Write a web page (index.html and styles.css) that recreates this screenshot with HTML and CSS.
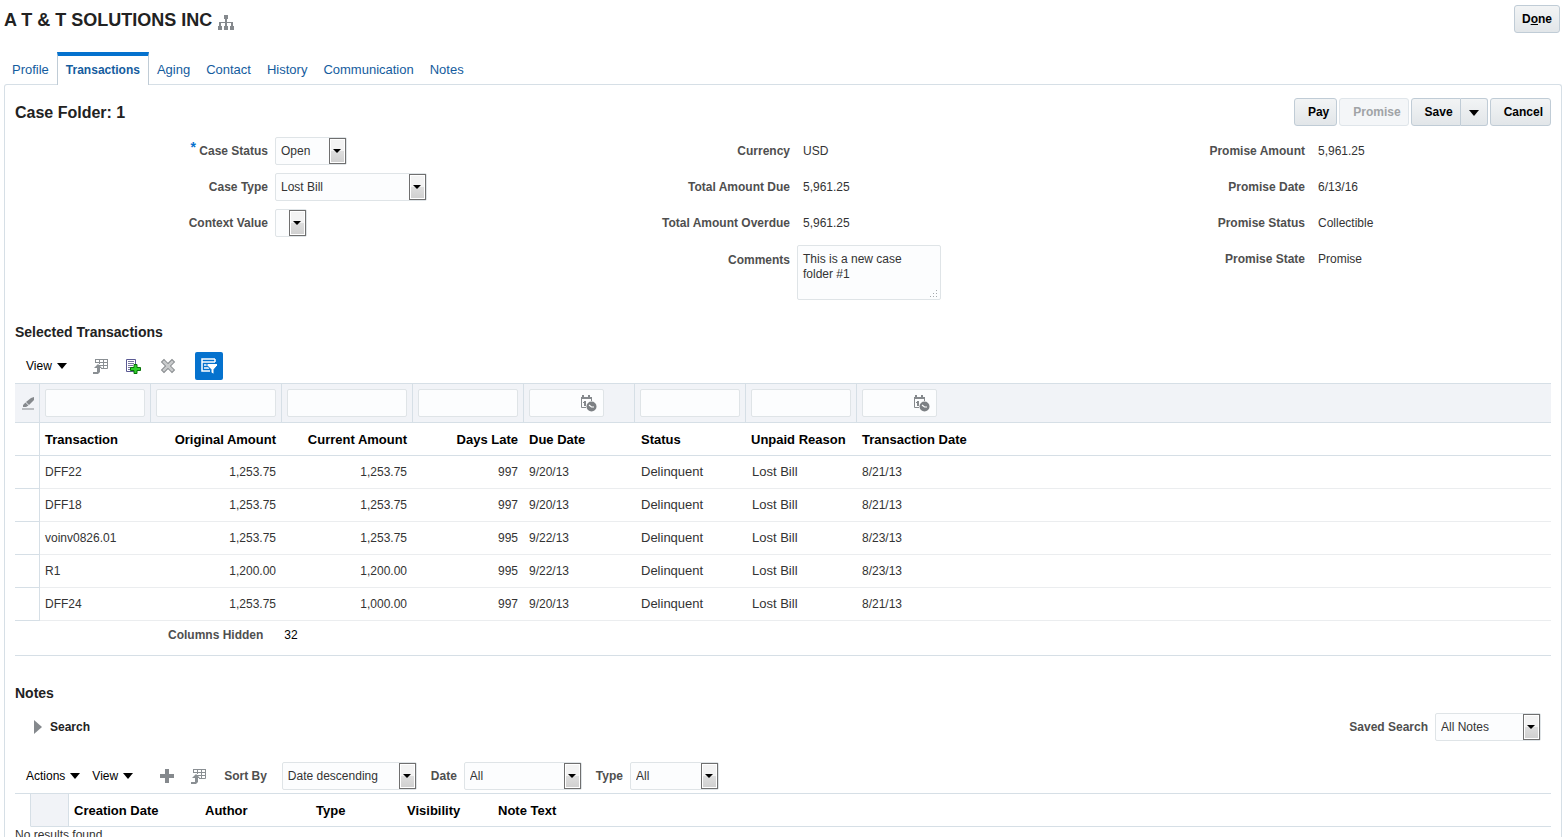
FILE: index.html
```html
<!DOCTYPE html>
<html lang="en">
<head>
<meta charset="utf-8">
<title>A T &amp; T SOLUTIONS INC</title>
<link rel="stylesheet" href="styles.css">
</head>
<body>
<svg class="sprite" aria-hidden="true">
  <symbol id="detach" viewBox="0 0 16 16">
    <path fill="none" stroke="#8a8f93" d="M2.500 5V1.500h12v9H8M2 4.500h12.500M6 7.500h8.500M6.500 1v5M10.500 1v9.500"/>
    <path fill="#8a8f93" d="M2 1h13v1H2zM5 6l4 4H7v4l-2 2H0v-2h4v-4H1z"/>
  </symbol>
  <symbol id="calendar" viewBox="0 0 17 17">
    <path fill="none" stroke="#85898d" d="M6 12.500H1.500V3.500h10V6"/>
    <path fill="#85898d" d="M1 2h11v2H1zM2 0h2v3H2zM8 0h2v3H8zM4 6h2v5H4V8H3V7h1z"/>
    <circle cx="11.500" cy="11.500" r="5" fill="#7c8084"/>
    <path d="M9 10l2.500 2H14" fill="none" stroke="#fff" stroke-width="1.200"/>
  </symbol>
</svg>

<header class="page-head">
  <h1>A T &amp; T SOLUTIONS INC</h1>
  <svg class="org" viewBox="0 0 16 15" aria-hidden="true"><path fill="#85898d" d="M6 0h4v4H9v3h6v4h1v4h-4v-4h1V8H9v3h1v4H6v-4h1V8H3v3h1v4H0v-4h1V7h6V4H6z"/></svg>
  <button class="btn done" type="button">D<u>o</u>ne</button>
</header>

<nav class="tabs">
  <a href="#profile">Profile</a>
  <a href="#transactions" class="current" aria-current="page">Transactions</a>
  <a href="#aging">Aging</a>
  <a href="#contact">Contact</a>
  <a href="#history">History</a>
  <a href="#communication">Communication</a>
  <a href="#notes">Notes</a>
</nav>

<main class="panel">
  <div class="section-head">
    <h2>Case Folder: 1</h2>
    <div class="actions">
      <button class="btn" type="button">Pay</button>
      <button class="btn" type="button" disabled>Promise</button>
      <span class="split">
        <button class="btn save" type="button">Save</button>
        <button class="btn more" type="button" aria-label="More save options"><span class="caret"></span></button>
      </span>
      <button class="btn" type="button">Cancel</button>
    </div>
  </div>

  <div class="form">
    <div class="form-col">
      <div class="field"><label for="status"><span class="req">*</span> Case Status</label><span class="select w-status"><select id="status"><option>Open</option></select></span></div>
      <div class="field"><label for="ctype">Case Type</label><span class="select w-type"><select id="ctype"><option>Lost Bill</option></select></span></div>
      <div class="field"><label for="context">Context Value</label><span class="select w-context"><select id="context"><option></option></select></span></div>
    </div>
    <dl class="form-col">
      <div class="field"><dt>Currency</dt><dd>USD</dd></div>
      <div class="field"><dt>Total Amount Due</dt><dd>5,961.25</dd></div>
      <div class="field"><dt>Total Amount Overdue</dt><dd>5,961.25</dd></div>
      <div class="field tall"><dt><label for="comments">Comments</label></dt><dd class="area">
        <textarea id="comments">This is a new case folder #1</textarea>
        <svg class="grip" viewBox="0 0 9 9" aria-hidden="true"><path fill="#a5a9ad" d="M7 0h1v1H7zM7 3h1v1H7zM4 3h1v1H4zM7 6h1v1H7zM4 6h1v1H4zM1 6h1v1H1z"/></svg>
      </dd></div>
    </dl>
    <dl class="form-col">
      <div class="field"><dt>Promise Amount</dt><dd>5,961.25</dd></div>
      <div class="field"><dt>Promise Date</dt><dd>6/13/16</dd></div>
      <div class="field"><dt>Promise Status</dt><dd>Collectible</dd></div>
      <div class="field"><dt>Promise State</dt><dd>Promise</dd></div>
    </dl>
  </div>

  <h3>Selected Transactions</h3>
  <div class="toolbar">
    <button class="menu" type="button">View <span class="caret"></span></button>
    <button class="icon first" type="button" aria-label="Detach"><svg viewBox="0 0 16 16"><use href="#detach"/></svg></button>
    <button class="icon" type="button" aria-label="Add row"><svg viewBox="0 0 16 16"><path fill="#fff" stroke="#5b5a94" d="M1.500 1.500h9v12h-9z"/><path stroke="#77769f" d="M3 3.500h6M3 5.500h6M3 7.500h5M3 9.500h3M3 11.500h3"/><path fill="#2fd02a" stroke="#087308" d="M9 6.500h3v3h3.500v3H12v3H9v-3H5.500v-3H9z"/></svg></button>
    <button class="icon delete" type="button" aria-label="Delete"><svg viewBox="0 0 16 16"><path d="M4 4l8 8M12 4l-8 8" fill="none" stroke="#84888b" stroke-width="4.500" stroke-linecap="square"/><path d="M4 4l8 8M12 4l-8 8" fill="none" stroke="#c9cbcc" stroke-width="2.600" stroke-linecap="square"/></svg></button>
    <button class="icon filter" type="button" aria-label="Query by example" aria-pressed="true"><svg viewBox="0 0 16 16"><path fill="none" stroke="#fff" stroke-width="1.500" d="M14 1H1v12h8M1 4h13M14 1v3M3 7h4M3 10h5"/><path fill="#fff" stroke="#0572ce" d="M6 5.500h10.500v2L13 11.500V16h-1l-2-1.500v-3l-4-4z"/></svg></button>
  </div>

  <table class="grid trans">
    <colgroup><col class="c-sel"><col class="c-mid"><col class="c-amt"><col class="c-amt"><col class="c-mid"><col class="c-mid"><col class="c-mid"><col class="c-mid"><col></colgroup>
    <thead>
      <tr class="filters">
        <td><button class="eraser" type="button" aria-label="Clear filters"><svg viewBox="0 0 12 14"><path fill="#85898d" d="M12 1v3L7 9 4 6l5-4zM3.500 6.500l3 3L4 11H1V9zM0 12.500h12v1H0z"/></svg></button></td>
        <td><input type="text" aria-label="Filter Transaction"></td>
        <td><input type="text" aria-label="Filter Original Amount"></td>
        <td><input type="text" aria-label="Filter Current Amount"></td>
        <td><input type="text" aria-label="Filter Days Late"></td>
        <td><span class="date"><input type="text" aria-label="Filter Due Date"><svg viewBox="0 0 17 17" aria-hidden="true"><use href="#calendar"/></svg></span></td>
        <td><input type="text" aria-label="Filter Status"></td>
        <td><input type="text" aria-label="Filter Unpaid Reason"></td>
        <td><span class="date"><input type="text" aria-label="Filter Transaction Date"><svg viewBox="0 0 17 17" aria-hidden="true"><use href="#calendar"/></svg></span></td>
      </tr>
      <tr><th></th><th>Transaction</th><th class="num">Original Amount</th><th class="num">Current Amount</th><th class="num">Days Late</th><th>Due Date</th><th class="word">Status</th><th>Unpaid Reason</th><th>Transaction Date</th></tr>
    </thead>
    <tbody>
      <tr><td></td><td>DFF22</td><td class="num">1,253.75</td><td class="num">1,253.75</td><td class="num">997</td><td>9/20/13</td><td class="word">Delinquent</td><td class="word">Lost Bill</td><td>8/21/13</td></tr>
      <tr><td></td><td>DFF18</td><td class="num">1,253.75</td><td class="num">1,253.75</td><td class="num">997</td><td>9/20/13</td><td class="word">Delinquent</td><td class="word">Lost Bill</td><td>8/21/13</td></tr>
      <tr><td></td><td>voinv0826.01</td><td class="num">1,253.75</td><td class="num">1,253.75</td><td class="num">995</td><td>9/22/13</td><td class="word">Delinquent</td><td class="word">Lost Bill</td><td>8/23/13</td></tr>
      <tr><td></td><td>R1</td><td class="num">1,200.00</td><td class="num">1,200.00</td><td class="num">995</td><td>9/22/13</td><td class="word">Delinquent</td><td class="word">Lost Bill</td><td>8/23/13</td></tr>
      <tr><td></td><td>DFF24</td><td class="num">1,253.75</td><td class="num">1,000.00</td><td class="num">997</td><td>9/20/13</td><td class="word">Delinquent</td><td class="word">Lost Bill</td><td>8/21/13</td></tr>
    </tbody>
  </table>
  <div class="hidden-cols"><b>Columns Hidden</b><span>32</span></div>

  <h3 class="notes-title">Notes</h3>
  <div class="search-row">
    <button class="disclose" type="button" aria-expanded="false"><span class="tri"></span>Search</button>
    <div class="saved"><label for="saved">Saved Search</label><span class="select w-saved"><select id="saved"><option>All Notes</option></select></span></div>
  </div>
  <div class="toolbar notes-bar">
    <button class="menu" type="button">Actions <span class="caret"></span></button>
    <button class="menu" type="button">View <span class="caret"></span></button>
    <button class="icon first" type="button" aria-label="Create"><svg viewBox="0 0 16 16"><path fill="#85898d" d="M6 1h4v5h5v4h-5v5H6v-5H1V6h5z"/></svg></button>
    <button class="icon" type="button" aria-label="Detach"><svg viewBox="0 0 16 16"><use href="#detach"/></svg></button>
    <div class="pick sort"><label for="sort">Sort By</label><span class="select w-sort"><select id="sort"><option>Date descending</option></select></span></div>
    <div class="pick"><label for="ndate">Date</label><span class="select w-date"><select id="ndate"><option>All</option></select></span></div>
    <div class="pick"><label for="ntype">Type</label><span class="select w-ntype"><select id="ntype"><option>All</option></select></span></div>
  </div>
  <table class="grid notes">
    <colgroup><col class="n-edge"><col class="n-sel"><col class="c-amt"><col class="c-mid"><col class="n-mid"><col class="n-mid"><col></colgroup>
    <thead><tr><th></th><th></th><th>Creation Date</th><th>Author</th><th>Type</th><th>Visibility</th><th>Note Text</th></tr></thead>
    <tbody><tr><td colspan="7">No results found.</td></tr></tbody>
  </table>
</main>
</body>
</html>
```
FILE: styles.css
```css
*, *::before { box-sizing: border-box; }

html { scrollbar-width: none; }

body {
  margin: 0;
  padding: 5px 5px 0 4px;
  min-height: 100vh;
  background: #fff;
  color: #333;
  font: 12px/16px "Liberation Sans", Arial, sans-serif;
}

button, input, select, textarea { font: inherit; color: inherit; margin: 0; }
button { cursor: pointer; }
h1, h2, h3, dl, dd { margin: 0; }
.sprite { position: absolute; width: 0; height: 0; }

.page-head { display: flex; align-items: flex-start; padding-right: 2px; }
h1 { color: #222; font-size: 18px; line-height: 30px; }
.org { width: 16px; height: 15px; margin: 10px 0 0 6px; }

.btn {
  height: 28px;
  padding: 0 7px 0 13px;
  border: 1px solid #c0ccd6;
  border-radius: 3px;
  background: linear-gradient(#f2f4f5, #e2e6e9);
  color: #000;
  font-weight: bold;
}
.btn:disabled { border-color: #dfe5ea; background: #f4f6f8; color: #a0a3a6; }
.done { margin-left: auto; padding: 0 7px; }

.tabs { display: flex; margin: 17px 0 -1px; }
.tabs a {
  height: 33px;
  padding: 10px 8px 0;
  color: #145c9e;
  font-size: 13px;
  text-decoration: none;
}
.tabs a.current {
  padding: 6px 8px 0;
  border: solid #c0ccd6;
  border-width: 0 1px;
  border-top: 4px solid #0572ce;
  background: #fff;
  font-size: 12px;
  font-weight: bold;
  position: relative;
}

.panel {
  min-height: calc(100vh - 84px);
  padding: 13px 10px 0;
  border: 1px solid #d6dfe6;
  border-bottom: 0;
  border-radius: 3px 3px 0 0;
}

.section-head { display: flex; justify-content: space-between; align-items: flex-start; height: 35px; }
h2 { color: #222; font-size: 16px; line-height: 30px; }
.actions { display: flex; gap: 2px; }
.split { display: flex; }
.save { padding-right: 7px; border-radius: 3px 0 0 3px; }
.more { width: 27px; padding: 0; border-left: 0; border-radius: 0 3px 3px 0; }
.caret {
  display: inline-block;
  border: 5px solid transparent;
  border-top: 6px solid #000;
  border-bottom: 0;
}

.form { display: grid; grid-template-columns: 522fr 515fr 499fr; color: #333; }
.field { display: grid; grid-template-columns: 253px 1fr; align-items: center; min-height: 36px; column-gap: 7px; }
.field > label, dt, .hidden-cols b, .pick label, .saved label { color: #4f4f4f; font-weight: bold; }
.field > label, dt { text-align: right; }
.req { color: #0572ce; vertical-align: 3px; line-height: 8px; font-size: 14px; }
dd { padding-left: 6px; }
.field.tall { align-items: start; padding-top: 4px; }
.tall dt { padding-top: 7px; }
dd.area { position: relative; width: 144px; padding: 0; }
textarea {
  display: block;
  width: 100%;
  height: 55px;
  padding: 6px 5px;
  border: 1px solid #dfe4e7;
  border-radius: 2px;
  background: #fcfdfe;
  line-height: 15px;
  resize: none;
}
.grip { position: absolute; right: 3px; bottom: 1px; width: 9px; height: 9px; }

.select { position: relative; display: block; height: 28px; }
.select select {
  appearance: none;
  width: 100%;
  height: 28px;
  padding: 0 20px 0 5px;
  border: 1px solid #dfe4e7;
  border-radius: 2px;
  background: #fcfdfe;
}
.select::before {
  content: "";
  position: absolute;
  top: 1px;
  right: 1px;
  width: 17px;
  height: 26px;
  border: 1px solid #6f6f6f;
  background: linear-gradient(#f3f3f3 50%, #dedede 50%, #cfcfcf);
  box-shadow: inset 0 0 0 1px #fff;
  pointer-events: none;
}
.select::after {
  content: "";
  position: absolute;
  top: 12px;
  right: 6px;
  border: 4px solid transparent;
  border-top-color: #000;
  border-bottom: 0;
  pointer-events: none;
}
.w-status { width: 72px; }
.w-type { width: 152px; }
.w-context { width: 32px; }
.w-saved { width: 106px; }
.w-sort { width: 135px; }
.w-date { width: 118px; }
.w-ntype { width: 89px; }

h3 { margin-top: 24px; color: #222; font-size: 14px; line-height: 16px; }
.toolbar { display: flex; align-items: center; height: 28px; margin: 12px 0 3px; padding-left: 11px; }
.menu { display: flex; align-items: center; gap: 5px; margin-right: 12px; padding: 0; border: 0; background: none; color: #000; }
.icon { width: 16px; height: 16px; margin-right: 16px; padding: 0; border: 0; background: none; }
.icon.first { margin-left: 14px; }
.icon svg, .eraser svg { display: block; width: 100%; height: 100%; }
.icon.delete { margin: 0 16px 0 3px; }
.icon.filter { width: 28px; height: 28px; margin-left: 3px; padding: 6px; border-radius: 2px; background: #0572ce; }

.grid { width: 100%; table-layout: fixed; border-spacing: 0; }
.grid th, .grid td { padding: 0 5px; text-align: left; white-space: nowrap; }
.grid th { height: 33px; padding-top: 1px; border-bottom: 1px solid #d6dfe6; color: #000; font-size: 13px; }
.grid .num { padding-right: 6px; text-align: right; }
.c-sel { width: 25px; }
.c-mid { width: 111px; }
.c-amt { width: 131px; }
.n-edge { width: 16px; }
.n-sel { width: 38px; }
.n-mid { width: 91px; }

.trans tbody td { height: 33px; border-bottom: 1px solid #ebedef; }
.trans tbody td:first-child { border-bottom-color: #d6dfe6; }
.trans tr > :first-child { border-right: 1px solid #d6dfe6; }
.trans .word { padding-left: 6px; font-size: 13px; }
.filters td {
  height: 40px;
  border: solid #d6dfe6;
  border-width: 1px 1px 1px 0;
  background: #f1f3f7;
}
.filters td:last-child { border-right: 0; }
.filters input {
  display: block;
  width: 100%;
  height: 28px;
  padding: 0 5px;
  border: 1px solid #dfe4e7;
  border-radius: 2px;
  background: #fcfdfe;
}
.date { position: relative; display: block; width: 75px; }
.date svg { position: absolute; top: 6px; right: 7px; width: 17px; height: 17px; }
.eraser { display: block; width: 12px; height: 14px; margin-left: 2px; padding: 0; border: 0; background: none; }

.hidden-cols { display: flex; gap: 21px; height: 35px; padding: 6px 0 0 153px; border-bottom: 1px solid #d6dfe6; color: #000; }
.notes-title { margin-top: 29px; }
.search-row { display: flex; justify-content: space-between; align-items: center; margin-top: 12px; padding: 0 10px 0 19px; }
.disclose { display: flex; align-items: center; gap: 8px; padding: 0; border: 0; background: none; color: #222; font-weight: bold; }
.tri { border: 7px solid transparent; border-left: 8px solid #85898d; border-right: 0; }
.saved, .pick { display: flex; align-items: center; gap: 7px; }

.notes-bar { margin-top: 21px; }
.pick { margin-right: 14px; }
.pick.sort { gap: 15px; margin-left: 1px; }
.notes th { border-top: 1px solid #d6dfe6; height: 34px; }
.notes th:first-child, .notes th:nth-child(2) { border-right: 1px solid #d6dfe6; }
.notes th:first-child { border-bottom-color: #fff; }
.notes th:nth-child(2) { background: #f1f3f7; }
.notes tbody td { padding: 0; height: 16px; line-height: 16px; vertical-align: top; }
```
